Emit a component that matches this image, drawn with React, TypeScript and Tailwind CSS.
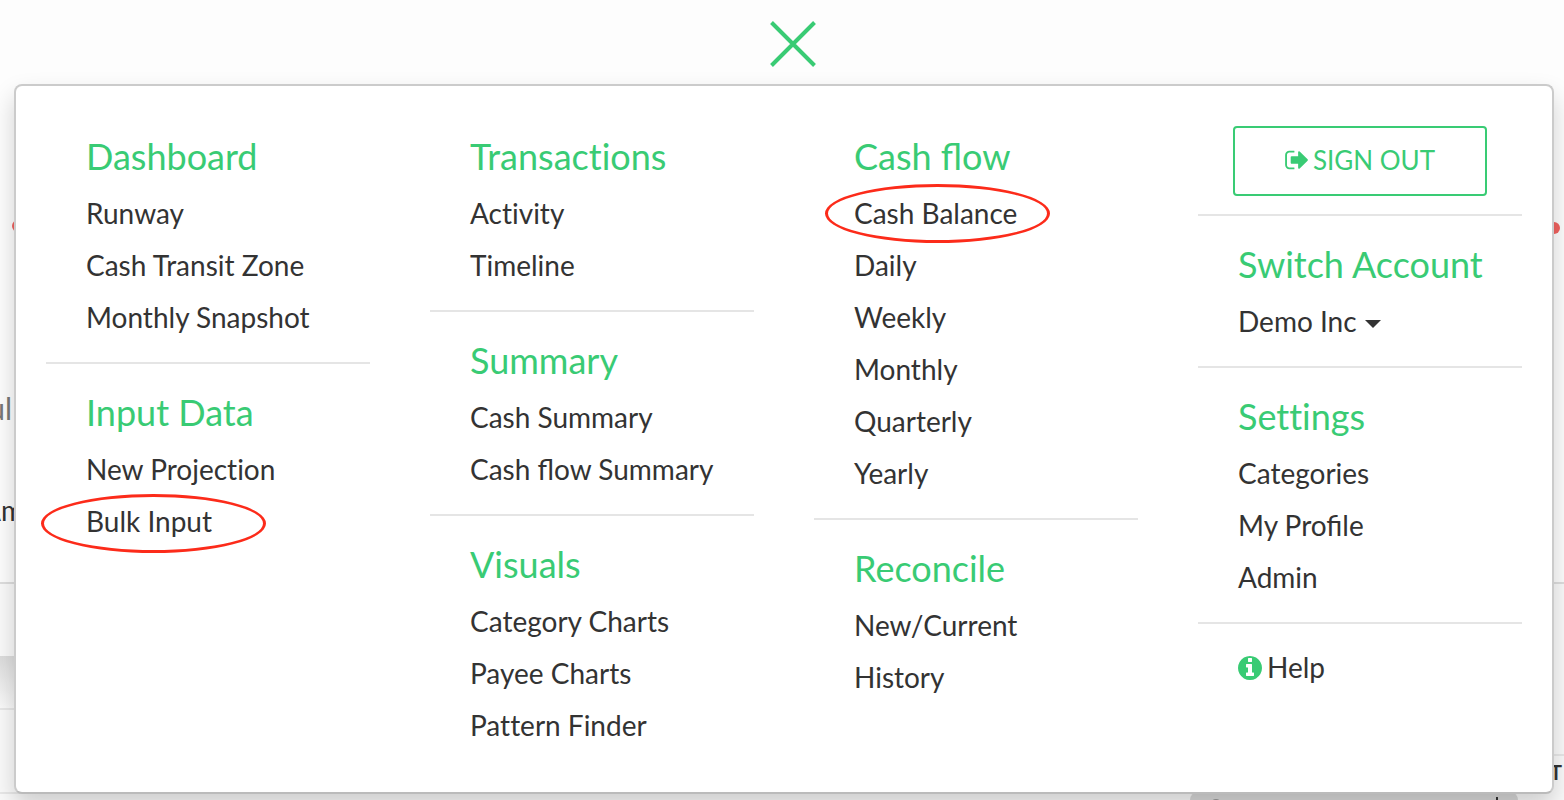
import React from "react";
import clsx from "clsx";

type MenuItem = {
  label: string;
  circled?: string;
};

type MenuGroup = {
  title: string;
  items: MenuItem[];
};

const columns: MenuGroup[][] = [
  [
    {
      title: "Dashboard",
      items: [{ label: "Runway" }, { label: "Cash Transit Zone" }, { label: "Monthly Snapshot" }],
    },
    {
      title: "Input Data",
      items: [{ label: "New Projection" }, { label: "Bulk Input", circled: "-left-[45px] -top-0.5" }],
    },
  ],
  [
    { title: "Transactions", items: [{ label: "Activity" }, { label: "Timeline" }] },
    { title: "Summary", items: [{ label: "Cash Summary" }, { label: "Cash flow Summary" }] },
    {
      title: "Visuals",
      items: [{ label: "Category Charts" }, { label: "Payee Charts" }, { label: "Pattern Finder" }],
    },
  ],
  [
    {
      title: "Cash flow",
      items: [
        { label: "Cash Balance", circled: "-left-[29px] -top-1" },
        { label: "Daily" },
        { label: "Weekly" },
        { label: "Monthly" },
        { label: "Quarterly" },
        { label: "Yearly" },
      ],
    },
    { title: "Reconcile", items: [{ label: "New/Current" }, { label: "History" }] },
  ],
];

const settings: MenuGroup = {
  title: "Settings",
  items: [{ label: "Categories" }, { label: "My Profile" }, { label: "Admin" }],
};

// Lato joins "ti" and "tt", only the fi and fl ligatures are wanted
const ligatures = (text: string) => (/t[it]/.test(text) ? "[font-variant-ligatures:none]" : "");

function SignOutIcon() {
  return (
    <svg className="h-[26px] w-[23px]" viewBox="0 0 1568 1792" fill="currentColor" aria-hidden="true">
      <path d="M640 1440q0 4 1 20t.5 26.5-3 23.5-10 19.5-20.5 6.5h-320q-119 0-203.5-84.5t-84.5-203.5v-704q0-119 84.5-203.5t203.5-84.5h320q13 0 22.5 9.5t9.5 22.5q0 4 1 20t.5 26.5-3 23.5-10 19.5-20.5 6.5h-320q-66 0-113 47t-47 113v704q0 66 47 113t113 47h312l11.5 1 11.5 3 8 5.5 7 9 2 13.5zm928-544q0 26-19 45l-544 544q-19 19-45 19t-45-19-19-45v-288h-448q-26 0-45-19t-19-45v-384q0-26 19-45t45-19h448v-288q0-26 19-45t45-19 45 19l544 544q19 19 19 45z" />
    </svg>
  );
}

function InfoIcon() {
  return (
    <svg className="h-7 w-6 text-[#39cb74]" viewBox="128 0 1536 1792" fill="currentColor" aria-hidden="true">
      <path d="M1152 1376v-160q0-14-9-23t-23-9h-96v-512q0-14-9-23t-23-9h-320q-14 0-23 9t-9 23v160q0 14 9 23t23 9h96v320h-96q-14 0-23 9t-9 23v160q0 14 9 23t23 9h448q14 0 23-9t9-23zm-128-896v-192q0-14-9-23t-23-9h-192q-14 0-23 9t-9 23v192q0 14 9 23t23 9h192q14 0 23-9t9-23zm640 416q0 209-103 385.5t-279.5 279.5-385.5 103-385.5-103-279.5-279.5-103-385.5 103-385.5 279.5-279.5 385.5-103 385.5 103 279.5 279.5 103 385.5z" />
    </svg>
  );
}

function Divider() {
  return <hr className="my-[18px] border-t-2 border-[#e5e5e5]" />;
}

function Title({ text, id }: { text: string; id?: string }) {
  return (
    <h2
      id={id}
      className={clsx("px-10 pb-0.5 text-[36px] leading-[60px] whitespace-nowrap text-[#39cb74]", ligatures(text))}
    >
      {text}
    </h2>
  );
}

function Group({ group }: { group: MenuGroup }) {
  return (
    <section>
      <Title text={group.title} />
      <ul className="px-10">
        {group.items.map((item) => (
          <li key={item.label} className="relative h-[52px]">
            <a
              href="#"
              className={clsx("block w-fit text-[28px] leading-[50px] whitespace-nowrap", ligatures(item.label))}
            >
              {item.label}
            </a>
            {item.circled && (
              <span
                className={clsx(
                  "pointer-events-none absolute h-[59px] w-[225px] rounded-[50%] border-3 border-[#fc2b1a]",
                  item.circled
                )}
              />
            )}
          </li>
        ))}
      </ul>
    </section>
  );
}

// Page that stays visible around the open menu
function Backdrop() {
  return (
    <div className="absolute inset-0 overflow-hidden bg-[#fdfdfd]" aria-hidden="true">
      <div className="h-[584px] border-b-2 border-[#dedede] pt-[220px]">
        <div className="flex justify-between pr-1 pl-3">
          <span className="size-3 rounded-full bg-[#f0625f]" />
          <span className="mt-0.5 size-3 rounded-full bg-[#f0625f]" />
        </div>
        <div className="mt-[154px] flex h-10 w-3 justify-end text-[30px] leading-10 text-[#777]">ul</div>
        <div className="mt-[62px] flex h-10 w-6 justify-end text-[28px] leading-10">Am</div>
      </div>
      <div className="flex justify-between bg-[#fafafa]">
        <div className="w-1/2 pt-[72px]">
          <div className="h-[52px] bg-linear-to-b from-[#dcdcdc] to-[#fafafa]" />
          <div className="h-[86px] border-y-2 border-[#e8e8e8]" />
        </div>
        <div className="w-1/2 pt-[170px]">
          <div className="border-t-2 border-[#e8e8e8] pr-0.5 text-right text-[20px] leading-8 font-bold">T</div>
          <div className="mt-1 mr-[46px] ml-auto flex h-10 w-[328px] justify-between rounded-t-lg bg-[#d8d8d8] px-5 pt-[5px]">
            <span className="flex gap-3 text-[20px] leading-6">
              <span className="mt-0.5 size-3 rounded-full border-2 border-[#999]" />C
            </span>
            <span className="h-4 w-0.5 bg-[#333]" />
          </div>
        </div>
      </div>
    </div>
  );
}

export default function App() {
  return (
    <div className="relative min-h-screen overflow-hidden font-[Lato,sans-serif] text-[#333]">
      <Backdrop />

      <div className="relative pr-[10px] pb-1.5 pl-[14px]">
        {/* Close */}
        <header className="flex h-[84px] items-start justify-center pt-[21px] pl-[18px]">
          <button type="button" aria-label="Close menu" className="text-[#39cb74]">
            <svg className="size-[46px]" viewBox="0 0 46 46" stroke="currentColor" strokeWidth="4">
              <path d="M1.5 1.5 44.5 44.5M44.5 1.5 1.5 44.5" />
            </svg>
          </button>
        </header>

        {/* Menu */}
        <nav className="grid grid-cols-4 rounded-lg border-2 border-[#cbcbcb] border-b-[#bbb] bg-white py-10 shadow-[0_12px_24px_rgba(0,0,0,0.175)]">
          {columns.map((groups, index) => (
            <div key={index} className="px-[30px]">
              {groups.map((group, i) => (
                <React.Fragment key={group.title}>
                  {i > 0 && <Divider />}
                  <Group group={group} />
                </React.Fragment>
              ))}
            </div>
          ))}

          <div className="px-[30px]">
            <div className="px-[35px]">
              <button
                type="button"
                className="flex h-[70px] w-full items-center justify-center gap-[5px] rounded border-2 border-[#39cb74] pb-0.5 text-[26px] whitespace-nowrap text-[#39cb74]"
              >
                <SignOutIcon />
                SIGN OUT
              </button>
            </div>
            <Divider />
            <Title id="switch-account" text="Switch Account" />
            <div className="px-10">
              <div className="relative inline-flex h-[52px]">
                <select
                  aria-labelledby="switch-account"
                  className="field-sizing-content h-[50px] appearance-none bg-transparent pr-6 text-[28px]"
                >
                  <option>Demo Inc</option>
                </select>
                <span className="pointer-events-none absolute top-6 right-0 border-x-8 border-t-8 border-x-transparent border-t-[#333]" />
              </div>
            </div>
            <Divider />
            <Group group={settings} />
            <Divider />
            <a href="#" className="mx-10 flex h-[52px] items-center gap-[5px] text-[28px]">
              <InfoIcon />
              <span className="pb-0.5">Help</span>
            </a>
          </div>
        </nav>
      </div>
    </div>
  );
}
